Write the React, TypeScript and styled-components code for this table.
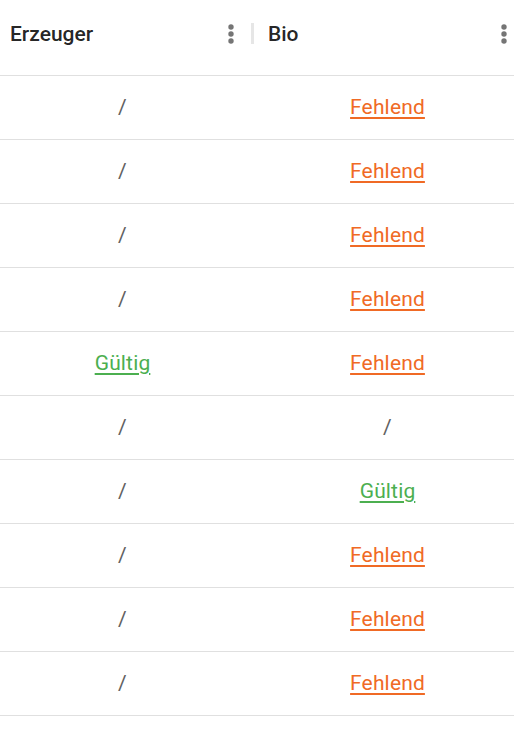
import React from "react";
import styled, { createGlobalStyle } from "styled-components";

const Global = createGlobalStyle`
  html, body { margin: 0; padding: 0; background: #fff; }
  body { font-family: Roboto, "Noto Sans", sans-serif; }
`;

const Grid = styled.div`
  width: 514px;
  display: flex;
  flex-direction: column;
`;

const HeaderRow = styled.div`
  display: grid;
  grid-template-columns: 251px 1fr;
  height: 75px;
  border-bottom: 1px solid #e0e0e0;
`;

const HeaderCell = styled.div<{ $first?: boolean }>`
  display: flex;
  align-items: center;
  padding: ${(p) => (p.$first ? "0 0 0 10px" : "0 0 0 17px")};
  position: relative;
`;

const Separator = styled.span`
  position: absolute;
  left: 0;
  top: 23px;
  width: 3px;
  height: 21px;
  background: #e6e6e6;
`;

const Title = styled.span`
  flex: 1;
  font-size: 21px;
  font-weight: 500;
  color: rgba(0, 0, 0, 0.87);
  margin-top: -7px;
`;

const MenuButton = styled.span<{ $right: number }>`
  width: 20px;
  height: 24px;
  margin-right: ${(p) => p.$right}px;
  margin-top: -7px;
  display: flex;
  align-items: center;
  justify-content: center;
`;

const Row = styled.div`
  display: grid;
  grid-template-columns: 245px 1fr;
  height: 63px;
  border-bottom: 1px solid #e0e0e0;
`;

const Cell = styled.div<{ $second?: boolean }>`
  display: flex;
  align-items: center;
  justify-content: center;
  padding-left: ${(p) => (p.$second ? "16px" : "0")};
  font-size: 21px;
  letter-spacing: 0.15px;
`;

const Slash = styled.span`
  color: #616161;
  margin-bottom: 1px;
`;

const Status = styled.span<{ $ok: boolean }>`
  color: ${(p) => (p.$ok ? "#4caf50" : "#f06a25")};
  text-decoration: underline;
  text-decoration-thickness: 2px;
  text-underline-offset: 3px;
  margin-bottom: 1px;
`;

const Dots = () => (
  <svg width="6" height="20" viewBox="0 0 6 20">
    <circle cx="3" cy="3" r="2.7" fill="#757575" />
    <circle cx="3" cy="10" r="2.7" fill="#757575" />
    <circle cx="3" cy="17" r="2.7" fill="#757575" />
  </svg>
);

type Val = "/" | "Gültig" | "Fehlend";
const rows: [Val, Val][] = [
  ["/", "Fehlend"],
  ["/", "Fehlend"],
  ["/", "Fehlend"],
  ["/", "Fehlend"],
  ["Gültig", "Fehlend"],
  ["/", "/"],
  ["/", "Gültig"],
  ["/", "Fehlend"],
  ["/", "Fehlend"],
  ["/", "Fehlend"],
];

const Value = ({ v }: { v: Val }) =>
  v === "/" ? <Slash>/</Slash> : <Status $ok={v === "Gültig"}>{v}</Status>;

export default function App() {
  return (
    <>
      <Global />
      <Grid>
        <HeaderRow>
          <HeaderCell $first>
            <Title>Erzeuger</Title>
            <MenuButton $right={10}>
              <Dots />
            </MenuButton>
          </HeaderCell>
          <HeaderCell>
            <Separator />
            <Title>Bio</Title>
            <MenuButton $right={0}>
              <Dots />
            </MenuButton>
          </HeaderCell>
        </HeaderRow>
        {rows.map((r, i) => (
          <Row key={i}>
            <Cell>
              <Value v={r[0]} />
            </Cell>
            <Cell $second>
              <Value v={r[1]} />
            </Cell>
          </Row>
        ))}
      </Grid>
    </>
  );
}
